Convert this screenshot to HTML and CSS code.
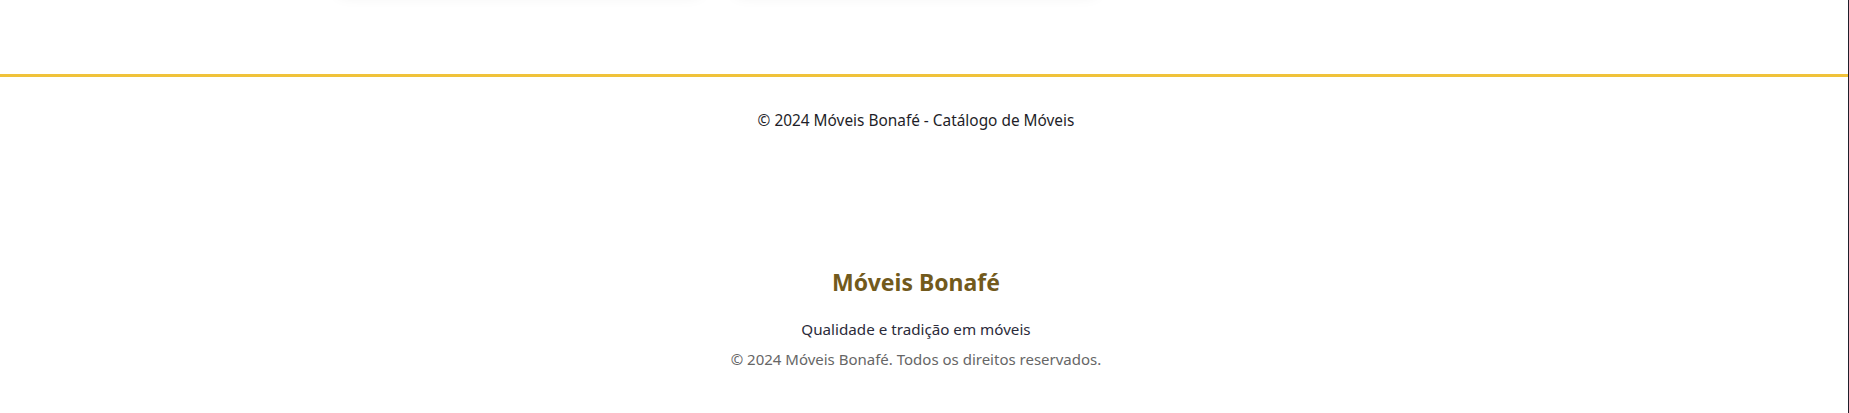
FILE: index.html
```html
<!DOCTYPE html>
<html lang="pt-BR">
<head>
<meta charset="utf-8">
<title>Móveis Bonafé</title>
<link rel="stylesheet" href="styles.css">
</head>
<body>
<div class="page">
  <section class="catalog">
    <div class="grid">
      <div class="card"></div>
      <div class="card"></div>
    </div>
  </section>
  <footer class="catalog-footer">
    <p>© 2024 Móveis Bonafé - Catálogo de Móveis</p>
  </footer>
  <footer class="site-footer">
    <h3 class="brand">Móveis Bonafé</h3>
    <p class="tagline">Qualidade e tradição em móveis</p>
    <p class="copy">© 2024 Móveis Bonafé. Todos os direitos reservados.</p>
  </footer>
</div>
</body>
</html>
```
FILE: styles.css
```css
html, body {
  margin: 0;
  padding: 0;
  background: #ffffff;
}
body {
  font-family: "Noto Sans", "Open Sans", sans-serif;
  color: #222222;
  border-right: 1px solid #1f1f2b;
  height: 413px;
  overflow: hidden;
}
.page {
  display: flex;
  flex-direction: column;
}
.catalog {
  padding: 0 36px 0 20px;
  height: 74px;
}
.grid {
  max-width: 1160px;
  margin: -110px auto 0;
  display: grid;
  grid-template-columns: repeat(3, 1fr);
  gap: 30px;
}
.card {
  height: 100px;
  background: #ffffff;
  border-radius: 10px;
  box-shadow: 0 5px 15px rgba(0, 0, 0, 0.08);
}
.catalog-footer {
  border-top: 3px solid #f0c23a;
  padding: 32px 16px 0 0;
  height: 157px;
  text-align: center;
}
.catalog-footer p {
  margin: 0;
  font-size: 15.4px;
  line-height: 24px;
  color: #1e1e28;
}
.site-footer {
  padding: 0 16px 0 0;
  text-align: center;
}
.brand {
  margin: 0 0 20px;
  font-size: 23px;
  line-height: 32px;
  font-weight: 700;
  color: #725a1c;
}
.tagline {
  margin: 0 0 8px;
  font-size: 15.2px;
  line-height: 22px;
  color: #2b2b3a;
}
.copy {
  margin: 0;
  font-size: 15px;
  line-height: 22px;
  color: #666666;
}
```
